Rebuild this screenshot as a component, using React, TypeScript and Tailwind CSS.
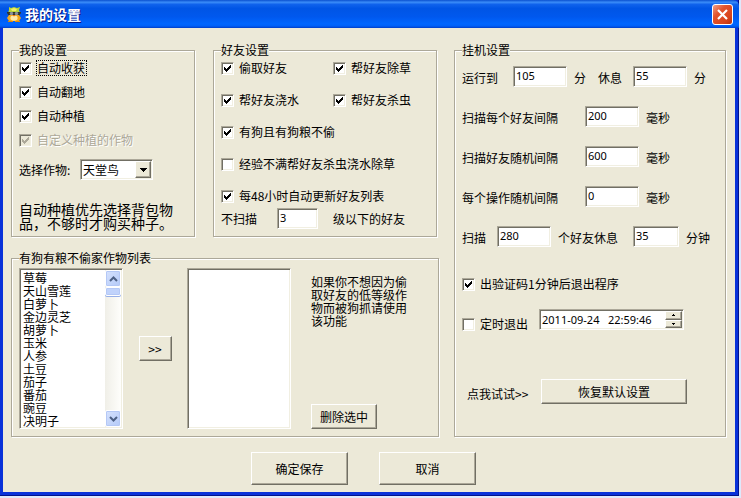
import { useState } from "react";
import type { ReactNode } from "react";

const crops = [
  "草莓", "天山雪莲", "白萝卜", "金边灵芝", "胡萝卜", "玉米",
  "人参", "土豆", "茄子", "番茄", "豌豆", "决明子",
];

// Sunken edge shared by text boxes, lists and tick boxes
const sunken =
  "border border-t-[#aca899] border-l-[#aca899] border-r-white border-b-white bg-white shadow-[inset_1px_1px_0_#716f64,inset_-1px_-1px_0_#f1efe2]";

// Raised edge shared by all push buttons
const raised =
  "border border-t-white border-l-white border-r-[#716f64] border-b-[#716f64] bg-[#ece9d8] shadow-[inset_-1px_-1px_0_#aca899]";

function Group({ title, className = "", children }: { title: string; className?: string; children: ReactNode }) {
  return (
    <fieldset
      className={`min-w-0 border border-[#aca899] px-[7px] shadow-[1px_1px_0_#fff,inset_1px_1px_0_#fff] ${className}`}
    >
      <legend className="h-3 bg-[#ece9d8] leading-3">{title}</legend>
      {children}
    </fieldset>
  );
}

function Check({
  label,
  checked = false,
  disabled = false,
  focused = false,
}: {
  label: string;
  checked?: boolean;
  disabled?: boolean;
  focused?: boolean;
}) {
  return (
    <label className="flex h-6 items-center gap-1 whitespace-nowrap">
      <span className="grid">
        <input
          type="checkbox"
          defaultChecked={checked}
          disabled={disabled}
          className={`peer size-[13px] appearance-none [grid-area:1/1] disabled:bg-[#ece9d8] ${sunken}`}
        />
        <svg
          viewBox="0 0 13 13"
          shapeRendering="crispEdges"
          className="pointer-events-none invisible size-[13px] fill-black [grid-area:1/1] peer-checked:visible peer-disabled:fill-[#aca899]"
        >
          <path d="M3 5h1v1h1v1h1v-1h1v-1h1v-1h1v-1h1v3h-1v1h-1v1h-1v1h-1v1h-1v-1h-1v-1h-1z" />
        </svg>
      </span>
      <span
        className={`border border-dotted pr-px leading-[14px] ${focused ? "border-black" : "border-transparent"} ${
          disabled ? "text-[#aca899] [text-shadow:1px_1px_0_#fff]" : ""
        }`}
      >
        {label}
      </span>
    </label>
  );
}

function NumberBox({ value, label, className = "w-[54px]" }: { value: string; label: string; className?: string }) {
  return (
    <input
      type="text"
      aria-label={label}
      defaultValue={value}
      className={`h-[21px] pr-1 pb-0.5 pl-0.5 font-['Noto_Sans'] text-[11px] leading-4 outline-none ${sunken} ${className}`}
    />
  );
}

function DelayRow({ label, value }: { label: string; value: string }) {
  return (
    <div className="flex h-[21px] items-end leading-[18px]">
      <span className="w-[123px]">{label}</span>
      <NumberBox value={value} label={label} />
      <span className="pl-[7px]">毫秒</span>
    </div>
  );
}

function Button({ children, className }: { children: ReactNode; className: string }) {
  return (
    <button type="button" className={`${raised} ${className}`}>
      {children}
    </button>
  );
}

function ScrollArrow({ down = false }: { down?: boolean }) {
  return (
    <button
      type="button"
      aria-label={down ? "向下" : "向上"}
      className="flex h-[17px] items-center justify-center rounded-xs border border-white bg-linear-to-br from-[#d6e2fd] to-[#b4caf8] shadow-[inset_0_0_0_1px_#b4c8f6]"
    >
      <svg viewBox="0 0 9 6" className="h-1.5 w-[9px]" fill="none" stroke="#4d6185" strokeWidth="2">
        <path d={down ? "M1 1l3.5 3.5L8 1" : "M1 5l3.5-3.5L8 5"} />
      </svg>
    </button>
  );
}

function AppIcon() {
  return (
    <svg viewBox="0 0 16 16" className="size-4">
      <path d="M3 1l2 1 3-1 3 1 3-1-1 3 1 3H2l1-3z" fill="#b9d63a" />
      <path d="M5 3l3-1 3 1-1 2H6z" fill="#f2ee6a" />
      <path d="M1 6h14v1l-2 3H3L1 7z" fill="#33352c" />
      <circle cx="5.5" cy="7.5" r="1.7" fill="#8b929c" />
      <circle cx="10.5" cy="7.5" r="1.7" fill="#8b929c" />
      <path d="M3 9h10l2 3-2 3H3l-2-3z" fill="#f5a91c" />
      <ellipse cx="8" cy="12" rx="3.6" ry="2.8" fill="#ffe9a8" />
      <path d="M6 9h4l-2 1.6z" fill="#ef7d12" />
      <path d="M2 15h5v1H2zM9 15h5v1H9z" fill="#d98a10" />
    </svg>
  );
}

export default function App() {
  const [crop, setCrop] = useState("天堂鸟");

  return (
    <div className="flex min-h-screen flex-col bg-[#dfe8fb] pr-0.5 pb-0.5 font-['Noto_Sans_CJK_SC',sans-serif] text-xs text-black">
      <div className="flex flex-1 flex-col bg-[#0831d9] shadow-[inset_-1px_-1px_0_#00138c]">

        {/* Title bar */}
        <header className="flex h-7 items-center gap-[3px] rounded-tr-md bg-[linear-gradient(#0a50cf_0%,#3a8cf8_8%,#0f62ec_16%,#0055e5_30%,#0058ee_60%,#0066ff_85%,#0060f8_93%,#003dc8_100%)] px-1.5">
          <AppIcon />
          <h1 className="flex-1 text-sm leading-5 font-bold text-white [text-shadow:1px_1px_0_#0a1883]">我的设置</h1>
          <button
            type="button"
            aria-label="关闭"
            className="flex size-[21px] items-center justify-center rounded-[3px] border border-white bg-[linear-gradient(135deg,#f0a088_0%,#e2532c_35%,#d8441c_75%,#b8300c_100%)]"
          >
            <svg viewBox="0 0 11 11" className="size-[11px]" stroke="#fff" strokeWidth="2.2">
              <path d="M1 1l9 9M10 1l-9 9" />
            </svg>
          </button>
        </header>

        <main className="mr-1 mb-1 ml-[3px] flex flex-1 flex-col bg-[#ece9d8] pt-4 pr-[9px] pb-[7px] pl-2">
          <div className="grid grid-cols-[428fr_272fr] gap-x-[15px]">

            <div className="flex flex-col gap-[15px]">
              <div className="grid h-[193px] grid-cols-[184fr_224fr] gap-x-[18px] pr-0.5">

                {/* My settings */}
                <Group title="我的设置">
                  <Check label="自动收获" checked focused />
                  <Check label="自动翻地" checked />
                  <Check label="自动种植" checked />
                  <Check label="自定义种植的作物" checked disabled />
                  <div className="mt-[7px] flex items-center">
                    <label htmlFor="crop" className="w-[61px]">选择作物:</label>
                    <span className="grid w-[73px]">
                      <select
                        id="crop"
                        value={crop}
                        onChange={(e) => setCrop(e.target.value)}
                        className={`h-[21px] appearance-none pl-0.5 leading-4 outline-none [grid-area:1/1] ${sunken}`}
                      >
                        <option>天堂鸟</option>
                        {crops.map((c) => (
                          <option key={c}>{c}</option>
                        ))}
                      </select>
                      <span
                        className={`pointer-events-none mr-0.5 flex h-[17px] w-4 items-center justify-center self-center justify-self-end [grid-area:1/1] ${raised}`}
                      >
                        <svg viewBox="0 0 7 4" className="h-1 w-[7px]" shapeRendering="crispEdges">
                          <path d="M0 0h7v1h-1v1h-1v1h-1v1h-1v-1h-1v-1h-1v-1h-1z" />
                        </svg>
                      </span>
                    </span>
                  </div>
                  <p className="mt-[22px] w-40 text-sm leading-[14px]">自动种植优先选择背包物品，不够时才购买种子。</p>
                </Group>

                {/* Friend settings */}
                <Group title="好友设置">
                  <div className="grid grid-cols-[112px_1fr] gap-y-2">
                    <Check label="偷取好友" checked />
                    <Check label="帮好友除草" checked />
                    <Check label="帮好友浇水" checked />
                    <Check label="帮好友杀虫" checked />
                    <div className="col-span-2"><Check label="有狗且有狗粮不偷" checked /></div>
                    <div className="col-span-2"><Check label="经验不满帮好友杀虫浇水除草" /></div>
                    <div className="col-span-2"><Check label="每48小时自动更新好友列表" checked /></div>
                  </div>
                  <div className="flex items-center">
                    <span className="w-14">不扫描</span>
                    <NumberBox value="3" label="不扫描等级" className="w-[41px]" />
                    <span className="pl-[15px]">级以下的好友</span>
                  </div>
                </Group>
              </div>

              {/* Crops never stolen from homes with a fed dog */}
              <Group title="有狗有粮不偷家作物列表" className="h-[185px]">
                <div className="flex pt-1">
                  <div className={`flex h-[161px] w-[104px] px-px ${sunken}`}>
                    <select
                      size={12}
                      aria-label="作物列表"
                      className="h-full min-w-0 flex-1 appearance-none overflow-hidden bg-transparent text-xs outline-none [scrollbar-width:none]"
                    >
                      {crops.map((c) => (
                        <option key={c} className="h-[13px] min-h-0 px-0.5 py-0 leading-[10px]">{c}</option>
                      ))}
                    </select>
                    <div className="my-px flex w-4 flex-col bg-linear-to-r from-[#f0efe8] to-[#fefefb]">
                      <ScrollArrow />
                      <div className="h-[9px] rounded-xs border border-white bg-[#c1d3fb] shadow-[inset_0_0_0_1px_#b4c8f6,0_1px_0_#98b0e8]" />
                      <div className="flex-1" />
                      <ScrollArrow down />
                    </div>
                  </div>
                  <div className="flex w-16 items-center justify-center">
                    <Button className="h-[25px] w-[33px]">&gt;&gt;</Button>
                  </div>
                  <select size={12} aria-label="已选作物" className={`h-[161px] w-[104px] appearance-none outline-none ${sunken}`} />
                  <div className="ml-5 flex flex-col items-start justify-between pt-[7px]">
                    <p className="w-24 leading-[13px]">如果你不想因为偷取好友的低等级作物而被狗抓请使用该功能</p>
                    <Button className="h-[25px] w-[66px]">删除选中</Button>
                  </div>
                </div>
              </Group>
            </div>

            {/* Idle settings */}
            <Group title="挂机设置">
              <div className="flex flex-col gap-[19px] pt-2.5">
                <div className="flex h-[21px] items-end leading-[18px]">
                  <span className="w-[51px]">运行到</span>
                  <NumberBox value="105" label="运行分钟" />
                  <span className="w-[31px] pl-[7px]">分</span>
                  <span className="w-[35px]">休息</span>
                  <NumberBox value="55" label="休息分钟" />
                  <span className="pl-[7px]">分</span>
                </div>
                <DelayRow label="扫描每个好友间隔" value="200" />
                <DelayRow label="扫描好友随机间隔" value="600" />
                <DelayRow label="每个操作随机间隔" value="0" />
                <div className="flex h-[21px] items-end leading-[18px]">
                  <span className="w-[35px]">扫描</span>
                  <NumberBox value="280" label="扫描好友数" />
                  <span className="w-[82px] pl-[7px]">个好友休息</span>
                  <NumberBox value="35" label="扫描后休息分钟" className="w-[46px]" />
                  <span className="pl-[7px]">分钟</span>
                </div>
              </div>

              <div className="pt-[25px]">
                <Check label="出验证码1分钟后退出程序" checked />
              </div>
              <div className="mt-[13px] flex items-start">
                <div className="w-[77px] pt-[3px]"><Check label="定时退出" /></div>
                <div className={`flex h-[21px] w-[145px] p-px ${sunken}`}>
                  <input
                    type="text"
                    aria-label="退出时间"
                    defaultValue={"2011-09-24\u00a0\u00a0\u00a022:59:46"}
                    className="min-w-0 flex-1 bg-transparent pl-px font-['Noto_Sans'] text-[11px] leading-4 outline-none"
                  />
                  <span className="flex w-[17px] flex-col">
                    <button type="button" aria-label="增加" className={`flex flex-1 items-center justify-center ${raised}`}>
                      <svg viewBox="0 0 3 2" className="h-0.5 w-[3px]" shapeRendering="crispEdges">
                        <path d="M1 0h1v1h1v1H0V1h1z" />
                      </svg>
                    </button>
                    <button type="button" aria-label="减少" className={`flex flex-1 items-center justify-center ${raised}`}>
                      <svg viewBox="0 0 3 2" className="h-0.5 w-[3px]" shapeRendering="crispEdges">
                        <path d="M0 0h3v1H2v1H1V1H0z" />
                      </svg>
                    </button>
                  </span>
                </div>
              </div>
              <div className="mt-[43px] flex items-center pl-[5px]">
                <a href="#try" className="w-[74px] pt-1">点我试试&gt;&gt;</a>
                <Button className="h-[25px] w-[146px]">恢复默认设置</Button>
              </div>
            </Group>
          </div>

          {/* Dialog buttons */}
          <div className="mt-[15px] flex justify-center gap-[31px] pr-2.5">
            <Button className="h-[33px] w-[97px]">确定保存</Button>
            <Button className="h-[33px] w-[97px]">取消</Button>
          </div>
        </main>
      </div>
    </div>
  );
}
